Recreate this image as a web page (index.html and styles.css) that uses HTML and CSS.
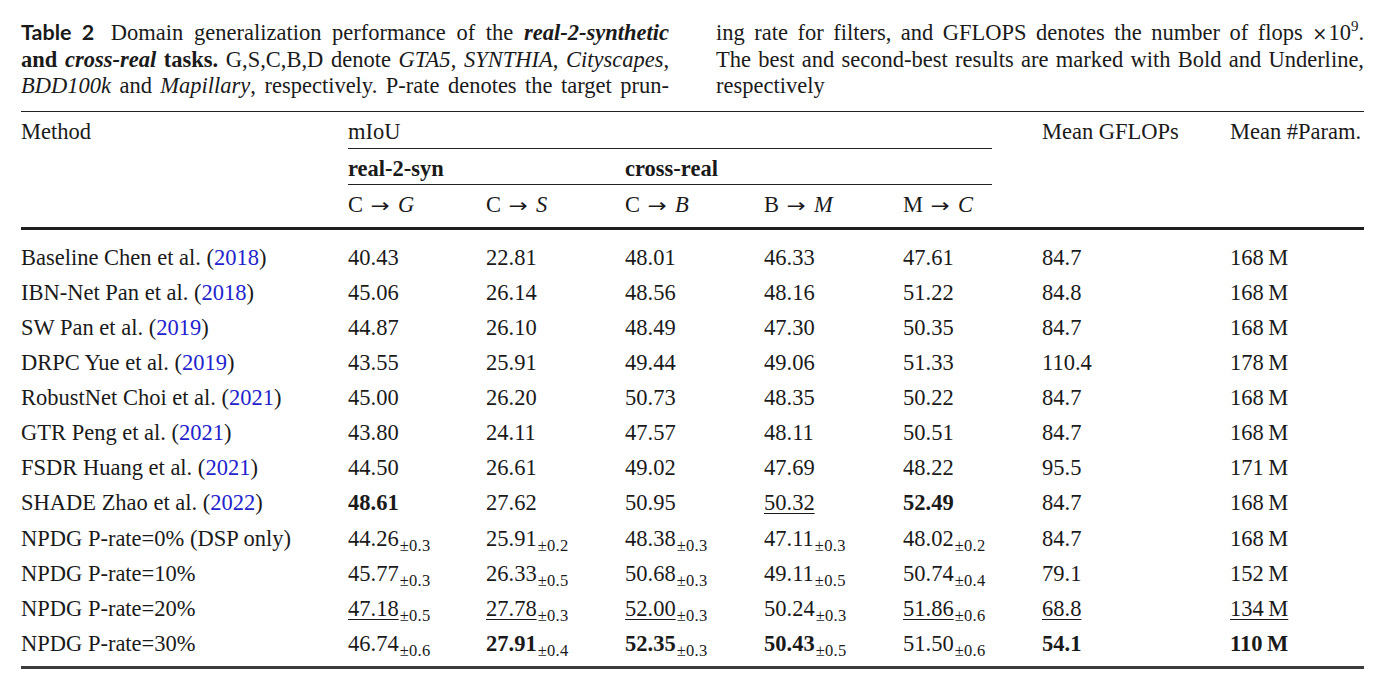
FILE: index.html
```html
<!DOCTYPE html>
<html lang="en">
<head>
<meta charset="utf-8">
<title>Table 2</title>
<link rel="stylesheet" href="styles.css">
</head>
<body>
<div class="page">
  <div class="caption">
    <div class="ccol">
      <span class="ln"><span class="tlabel">Table 2</span> Domain generalization performance of the <b><i>real-2-synthetic</i></b></span>
      <span class="ln"><b>and <i>cross-real</i> tasks.</b> G,S,C,B,D denote <i>GTA5</i>, <i>SYNTHIA</i>, <i>Cityscapes</i>,</span>
      <span class="ln"><i>BDD100k</i> and <i>Mapillary</i>, respectively. P-rate denotes the target prun-</span>
    </div>
    <div class="ccol">
      <span class="ln">ing rate for filters, and GFLOPS denotes the number of flops <span class="times">&times;</span>10<sup class="sup">9</sup>.</span>
      <span class="ln">The best and second-best results are marked with Bold and Underline,</span>
      <span class="ln last">respectively</span>
    </div>
  </div>

  <div class="tbl">
    <div class="h h1">Method</div>
    <div class="h h1 span5 rule">mIoU</div>
    <div class="h h1">Mean GFLOPs</div>
    <div class="h h1">Mean #Param.</div>

    <div class="h h2"></div>
    <div class="h h2 span2 rule"><b>real-2-syn</b></div>
    <div class="h h2 span3 rule trim"><b>cross-real</b></div>
    <div class="h h2"></div>
    <div class="h h2"></div>

    <div class="h h3"></div>
    <div class="h h3">C<span class="arr">&rarr;</span><i>G</i></div>
    <div class="h h3">C<span class="arr">&rarr;</span><i>S</i></div>
    <div class="h h3">C<span class="arr">&rarr;</span><i>B</i></div>
    <div class="h h3">B<span class="arr">&rarr;</span><i>M</i></div>
    <div class="h h3">M<span class="arr">&rarr;</span><i>C</i></div>
    <div class="h h3"></div>
    <div class="h h3"></div>

    <div class="sep"></div>

    <div class="c">Baseline Chen et al. (<span class="ref">2018</span>)</div>
    <div class="c">40.43</div><div class="c">22.81</div><div class="c">48.01</div><div class="c">46.33</div><div class="c">47.61</div><div class="c">84.7</div><div class="c">168&thinsp;M</div>

    <div class="c">IBN-Net Pan et al. (<span class="ref">2018</span>)</div>
    <div class="c">45.06</div><div class="c">26.14</div><div class="c">48.56</div><div class="c">48.16</div><div class="c">51.22</div><div class="c">84.8</div><div class="c">168&thinsp;M</div>

    <div class="c">SW Pan et al. (<span class="ref">2019</span>)</div>
    <div class="c">44.87</div><div class="c">26.10</div><div class="c">48.49</div><div class="c">47.30</div><div class="c">50.35</div><div class="c">84.7</div><div class="c">168&thinsp;M</div>

    <div class="c">DRPC Yue et al. (<span class="ref">2019</span>)</div>
    <div class="c">43.55</div><div class="c">25.91</div><div class="c">49.44</div><div class="c">49.06</div><div class="c">51.33</div><div class="c">110.4</div><div class="c">178&thinsp;M</div>

    <div class="c">RobustNet Choi et al. (<span class="ref">2021</span>)</div>
    <div class="c">45.00</div><div class="c">26.20</div><div class="c">50.73</div><div class="c">48.35</div><div class="c">50.22</div><div class="c">84.7</div><div class="c">168&thinsp;M</div>

    <div class="c">GTR Peng et al. (<span class="ref">2021</span>)</div>
    <div class="c">43.80</div><div class="c">24.11</div><div class="c">47.57</div><div class="c">48.11</div><div class="c">50.51</div><div class="c">84.7</div><div class="c">168&thinsp;M</div>

    <div class="c">FSDR Huang et al. (<span class="ref">2021</span>)</div>
    <div class="c">44.50</div><div class="c">26.61</div><div class="c">49.02</div><div class="c">47.69</div><div class="c">48.22</div><div class="c">95.5</div><div class="c">171&thinsp;M</div>

    <div class="c">SHADE Zhao et al. (<span class="ref">2022</span>)</div>
    <div class="c"><b>48.61</b></div><div class="c">27.62</div><div class="c">50.95</div><div class="c"><span class="ul">50.32</span></div><div class="c"><b>52.49</b></div><div class="c">84.7</div><div class="c">168&thinsp;M</div>

    <div class="c">NPDG P-rate=0% (DSP only)</div>
    <div class="c">44.26<sub class="pm">&plusmn;0.3</sub></div><div class="c">25.91<sub class="pm">&plusmn;0.2</sub></div><div class="c">48.38<sub class="pm">&plusmn;0.3</sub></div><div class="c">47.11<sub class="pm">&plusmn;0.3</sub></div><div class="c">48.02<sub class="pm">&plusmn;0.2</sub></div><div class="c">84.7</div><div class="c">168&thinsp;M</div>

    <div class="c">NPDG P-rate=10%</div>
    <div class="c">45.77<sub class="pm">&plusmn;0.3</sub></div><div class="c">26.33<sub class="pm">&plusmn;0.5</sub></div><div class="c">50.68<sub class="pm">&plusmn;0.3</sub></div><div class="c">49.11<sub class="pm">&plusmn;0.5</sub></div><div class="c">50.74<sub class="pm">&plusmn;0.4</sub></div><div class="c">79.1</div><div class="c">152&thinsp;M</div>

    <div class="c">NPDG P-rate=20%</div>
    <div class="c"><span class="ul">47.18</span><sub class="pm">&plusmn;0.5</sub></div><div class="c"><span class="ul">27.78</span><sub class="pm">&plusmn;0.3</sub></div><div class="c"><span class="ul">52.00</span><sub class="pm">&plusmn;0.3</sub></div><div class="c">50.24<sub class="pm">&plusmn;0.3</sub></div><div class="c"><span class="ul">51.86</span><sub class="pm">&plusmn;0.6</sub></div><div class="c"><span class="ul">68.8</span></div><div class="c"><span class="ul">134&thinsp;M</span></div>

    <div class="c">NPDG P-rate=30%</div>
    <div class="c">46.74<sub class="pm">&plusmn;0.6</sub></div><div class="c"><b>27.91</b><sub class="pm">&plusmn;0.4</sub></div><div class="c"><b>52.35</b><sub class="pm">&plusmn;0.3</sub></div><div class="c"><b>50.43</b><sub class="pm">&plusmn;0.5</sub></div><div class="c">51.50<sub class="pm">&plusmn;0.6</sub></div><div class="c"><b>54.1</b></div><div class="c"><b>110&thinsp;M</b></div>
  </div>
</div>
</body>
</html>
```
FILE: styles.css
```css
html, body {
  margin: 0;
  padding: 0;
  background: #ffffff;
}

.page {
  padding: 20px 0 0 21px;
  width: 1343px;
  font-family: "Liberation Serif", "Times New Roman", serif;
  color: #1a1a1a;
}

/* caption */
.caption {
  display: flex;
  gap: 47px;
  font-size: 22.5px;
  line-height: 26.6px;
  margin-bottom: 11.5px;
}

.ccol {
  flex: 1 1 0;
  min-width: 0;
}

.ln {
  display: block;
  text-align: justify;
  text-align-last: justify;
}

.ln.last {
  text-align: left;
  text-align-last: left;
}

.tlabel {
  font-family: "Lato", "Liberation Sans", sans-serif;
  font-weight: 700;
  font-size: 21.5px;
  line-height: 0;
  margin-right: 6px;
  color: #1a1a1a;
}

.times {
  font-family: "DejaVu Serif", serif;
  font-size: 18px;
  line-height: 0;
  margin-right: 1px;
}

.sup {
  font-size: 15px;
  line-height: 0;
  vertical-align: 9px;
}

/* table */
.tbl {
  display: grid;
  grid-template-columns: 327px 138px 139px 139px 139px 139px 188px 134px;
  border-top: 1.5px solid #222;
  border-bottom: 3px solid #3c3c3c;
  padding-bottom: 5.5px;
  font-size: 22.5px;
}

.h {
  padding-top: 4px;
  line-height: 31.5px;
  white-space: nowrap;
}

.h3 {
  padding-bottom: 6px;
}

.arr {
  display: inline-block;
  font-family: "DejaVu Sans", sans-serif;
  font-size: 19px;
  line-height: 0;
  margin: 0 10px 0 9px;
  transform: scaleX(1.2);
}

.span5 {
  grid-column: span 5;
  margin-right: 50px;
}

.span2 {
  grid-column: span 2;
}

.span3 {
  grid-column: span 3;
}

.trim {
  margin-right: 50px;
}

.rule {
  border-bottom: 1.3px solid #222;
}

.sep {
  grid-column: 1 / -1;
  border-top: 3px solid #1e1e1e;
  margin-bottom: 10px;
}

.c {
  line-height: 35.1px;
  white-space: nowrap;
}

.ref {
  color: #2323cc;
}

.ul {
  text-decoration: underline;
  text-decoration-thickness: 1px;
  text-underline-offset: 3px;
}

.pm {
  font-size: 16.5px;
  line-height: 0;
  vertical-align: -5px;
  letter-spacing: 0.3px;
  margin-left: 1px;
}
```
